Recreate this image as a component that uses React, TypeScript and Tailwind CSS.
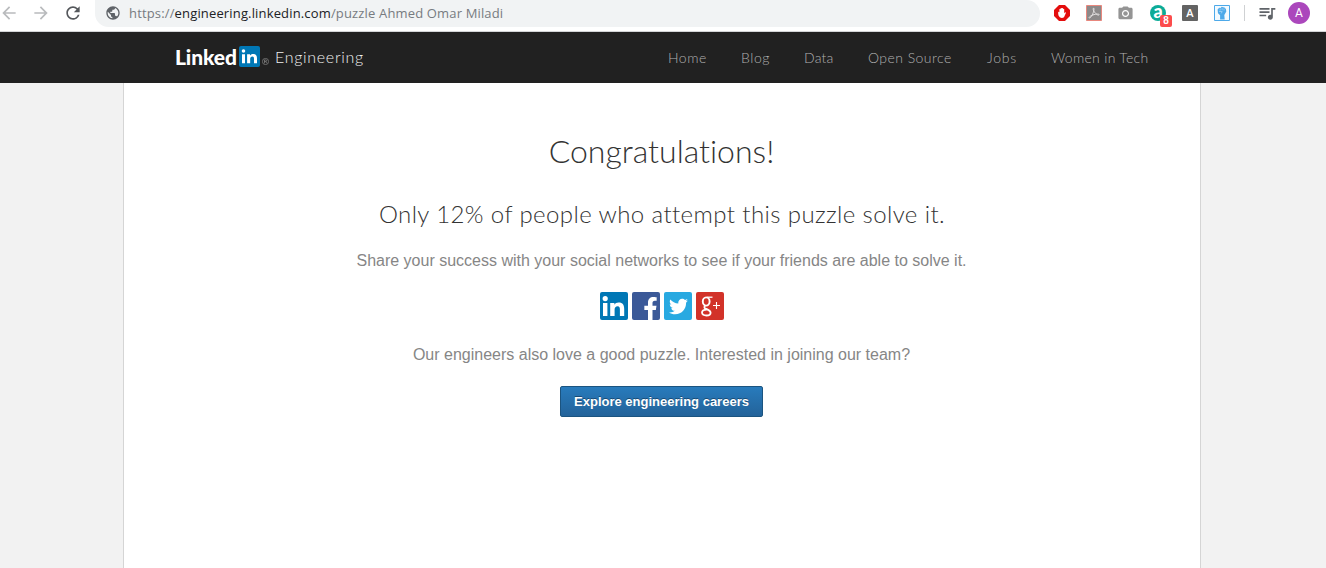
import React from "react";
import { MdArrowBack, MdArrowForward, MdRefresh, MdPublic, MdCameraAlt, MdQueueMusic } from "react-icons/md";
import { FaFacebookF, FaTwitter } from "react-icons/fa";

const LATO = "font-['Lato',sans-serif]";
const NAV = [
  { label: "Home", cls: "w-[39px] mr-[34px] tracking-[0.5px]" },
  { label: "Blog", cls: "w-[30px] mr-[33px] tracking-[0.6px]" },
  { label: "Data", cls: "w-[30px] mr-[34px] tracking-[0.2px]" },
  { label: "Open Source", cls: "w-[85px] mr-[34px] tracking-[0.45px]" },
  { label: "Jobs", cls: "w-[31px] mr-[33px] tracking-[0.7px]" },
  { label: "Women in Tech", cls: "w-[98px] tracking-[0.3px]" },
];

function Toolbar() {
  return (
    <header className="flex h-[31px] w-full items-start bg-white">
      <div className="flex h-[26px] items-center text-[#b9bbbd]">
        <MdArrowBack className="-ml-[1px] size-5" />
        <MdArrowForward className="ml-[12px] size-5" />
        <MdRefresh className="ml-[12px] size-5 text-[#55585c]" />
      </div>
      <div className="ml-[12px] flex h-[27px] w-[945px] items-center rounded-r-full rounded-bl-full bg-[#f1f3f4] pl-[10px]">
        <MdPublic className="-mt-px size-4 text-[#5f6368]" />
        <span className="-mt-px ml-[8px] whitespace-nowrap font-['Open_Sans','Noto_Sans',sans-serif] text-[13px] leading-[26px] tracking-[0.155px] text-[#777b80]">
          https://<span className="text-[#202124]">engineering.linkedin.com</span>/puzzle Ahmed Omar Miladi
        </span>
      </div>
      <div className="ml-[14px] flex h-[26px] items-center">
        <svg className="size-4" viewBox="0 0 16 16">
          <path d="M5 0h6l5 5v6l-5 5H5l-5-5V5z" fill="#e40d0d" />
          <path d="M4.2 7q.9-.6 1.2.4V4.2q.7-.8 1.2 0V6.8 3.3q.7-.8 1.2 0V6.6 3.3q.7-.8 1.2 0V6.8 4.1q.8-.7 1.2 0V8.3l.7-.9q.9-.5 1.1.3L10 12.2q-2 1.5-4.2 0Q4.3 11 4.2 9z" fill="#fff" />
        </svg>
        <svg className="ml-4 size-4" viewBox="0 0 16 16">
          <path d="M.5.5h15v15H.5z" fill="#8c8989" stroke="#e8877d" />
          <path d="M7.4 3.2c-.9 1.2 1 4.4 3.4 6.2 1.3 1 2.5.9 2.4.2-.2-1-4.6-.5-7.4.8-2.2 1-3.1 2.2-2.5 2.6.9.5 2.7-2.2 3.9-5.3.8-2.1 1.2-4.9.2-4.5z" fill="none" stroke="#e6e3e3" />
        </svg>
        <MdCameraAlt className="ml-[15px] mt-px size-[17px] text-[#949494]" />
        <div className="relative ml-4 flex size-4 items-center justify-center rounded-full bg-[#0bab97]">
          <span className="-mt-[4px] font-['Lato',sans-serif] text-[18px] font-black leading-4 text-white">a</span>
          <span className="absolute left-[10px] top-[10px] flex h-3 w-3 items-center justify-center rounded-[2px] bg-[#fc4c4c] font-['Liberation_Sans',sans-serif] text-[10px] font-bold leading-3 text-white">8</span>
        </div>
        <span className="ml-4 flex size-4 items-center justify-center rounded-[1px] bg-[#636363] font-['Open_Sans',sans-serif] text-[11px] font-semibold text-white">A</span>
        <svg className="ml-4 size-4" viewBox="0 0 16 16">
          <path d="M.5.5h15v15H.5z" fill="#f2faff" stroke="#4da9e9" />
          <path d="M3.6 4.4l1.6-1.6 1.4.2 1.1-1.2 1.4.5 1.4.1 1.4 1.5.4 2.7-1.4 2.3-.6 1 .4 4.6H6.1V10.3L4 8.2z" fill="#4da9e9" />
          <path d="M6.2 3.5v2M8.1 3.1v2.2M10 3.5v2M5 6.4l3.2.2-1 1.8" fill="none" stroke="#d6efff" strokeWidth=".5" />
        </svg>
        <span className="ml-[14px] h-4 w-px bg-[#cfd1d3]" />
        <MdQueueMusic className="ml-[12px] size-5 text-[#5f6368]" />
        <span className="ml-[11px] flex size-[22px] items-center justify-center rounded-full bg-[#ab47bc] font-['Roboto',sans-serif] text-[12px] text-white">A</span>
      </div>
    </header>
  );
}

function SiteHeader() {
  return (
    <div className="flex h-[52px] w-full border-t border-[#d3d5d7] bg-[#212121] pl-[174px] font-['Lato',sans-serif]">
      <div className="flex h-[51px] w-[494px] items-center">
        <span className="-mt-px w-[65px] whitespace-nowrap pl-px text-[21px] font-black leading-6 tracking-[-0.1px] text-white">Linked</span>
        <span className="-mt-[2px] flex size-[21px] items-center justify-center rounded-[2px] bg-[#0077b5] text-white">
          <svg className="size-[21px]" viewBox="0 0 28 28">
            <path d="M4 11h4v12H4zM6 4.2a2.4 2.4 0 110 4.8 2.4 2.4 0 010-4.8zM10.8 11h3.9v1.6c.8-1.2 2.1-2 4-2 4 0 5.3 2.4 5.3 6V23h-4v-5.8c0-1.7-.3-3.2-2.2-3.2s-2.9 1.3-2.9 3.2V23h-4.1z" fill="#fff" />
          </svg>
        </span>
        <svg className="ml-[2px] mt-[8px] size-[7px]" viewBox="0 0 7 7" fill="none" stroke="#999" strokeWidth=".6">
          <circle cx="3.5" cy="3.5" r="3.1" />
          <path d="M2.5 5.2V1.9h1.2q1 0 1 .8t-1 .8H2.5M3.7 3.5l1.1 1.7" />
        </svg>
        <span className="-mt-px ml-[6px] whitespace-nowrap text-[16px] font-light tracking-[0.7px] text-[#f0f0f0]">Engineering</span>
      </div>
      <nav className="flex h-[51px] items-center text-[14px] font-light text-[#b0b0b0]">
        {NAV.map((n) => <a key={n.label} className={`${n.cls} whitespace-nowrap`}>{n.label}</a>)}
      </nav>
    </div>
  );
}

export default function App() {
  return (
    <div className="flex h-[568px] w-[1326px] flex-col overflow-hidden bg-[#f2f2f2]">
      <Toolbar />
      <SiteHeader />
      <main className="ml-[123px] flex w-[1078px] flex-1 flex-col items-center border-x border-[#d5d5d5] bg-white font-['Liberation_Sans',Arial,sans-serif] text-[#868686]">
        <h1 className={`${LATO} mt-[48px] whitespace-nowrap pr-px text-[32px] font-light leading-[40px] text-[#333] [font-variant-ligatures:none]`}>Congratulations!</h1>
        <h2 className={`${LATO} mt-[27px] whitespace-nowrap text-[24px] font-light leading-[32px] tracking-[0.4px] text-[#333]`}>Only 12% of people who attempt this puzzle solve it.</h2>
        <p className="mt-[21px] whitespace-nowrap pr-px text-[16px] leading-[20px]">Share your success with your social networks to see if your friends are able to solve it.</p>
        <div className="mt-[21px] flex gap-1 text-white">
          <span className="size-7 rounded-[2px] bg-[#0077b5]">
            <svg className="size-7" viewBox="0 0 28 28">
              <path d="M3 11h4.4v13H3zM5.2 4a2.6 2.6 0 110 5.2 2.6 2.6 0 010-5.2zM10.2 11h4.2v1.8c.8-1.3 2.2-2.2 4.2-2.2 4.3 0 5.6 2.6 5.6 6.6V24h-4.3v-6.3c0-1.9-.4-3.4-2.3-3.4s-3 1.4-3 3.4V24h-4.4z" fill="#fff" />
            </svg>
          </span>
          <span className="flex size-7 items-end justify-center rounded-[2px] bg-[#3b5998] pl-[9px]"><FaFacebookF className="size-[23px]" /></span>
          <span className="flex size-7 items-center justify-center rounded-[2px] bg-[#28a9e1]"><FaTwitter className="mt-px size-[19px]" /></span>
          <span className="flex size-7 items-center justify-center rounded-[2px] bg-[#d23229]">
            <svg className="size-7" viewBox="0 0 28 28" fill="none" stroke="#fff">
              <ellipse cx="10.2" cy="9.5" rx="3.4" ry="4.1" strokeWidth="1.9" />
              <path d="M11 5.2h5.5" strokeWidth="1.3" />
              <path d="M9.2 13.7c-1.6 1.5-.8 2.4.9 3.2 2.2 1 4.5 1.8 4.5 3.8 0 1.8-1.7 2.8-4.2 2.8s-4.4-.9-4.4-2.9c0-2.1 2.1-3 4.8-3" strokeWidth="1.8" />
              <path d="M20.5 10v7M17 13.5h7" strokeWidth="1.1" />
            </svg>
          </span>
        </div>
        <p className="mt-[25px] whitespace-nowrap pr-px text-[16px] leading-[20px]">Our engineers also love a good puzzle. Interested in joining our team?</p>
        <a className="mr-px mt-[21px] flex h-[31px] w-[203px] items-center justify-center rounded-[2px] border border-[#1b5480] bg-gradient-to-b from-[#287bbc] to-[#23639a] text-[13px] font-bold text-white [text-shadow:0_-1px_0_#184b75]">Explore engineering careers</a>
      </main>
    </div>
  );
}
